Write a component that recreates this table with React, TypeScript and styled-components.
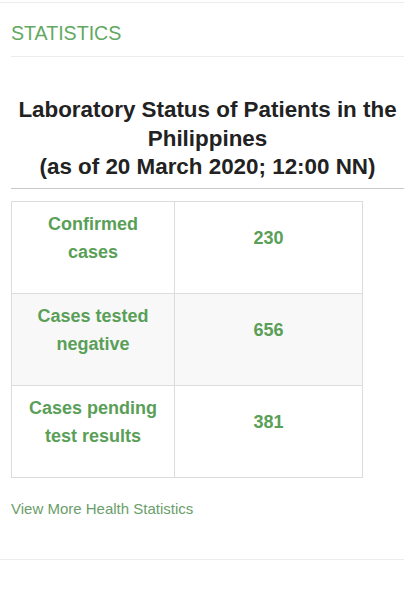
import React from "react";
import styled, { createGlobalStyle } from "styled-components";

const Global = createGlobalStyle`
  html, body { margin: 0; padding: 0; background: #fff; }
  body { font-family: "Liberation Sans", Arial, sans-serif; }
`;

const Panel = styled.div`
  margin-top: 2px;
  border-top: 1px solid #ececec;
  border-bottom: 1px solid #ececec;
  padding-bottom: 40px;
`;

const Body = styled.div`
  margin-left: 11px;
`;

const SectionTitle = styled.h2`
  margin: 0;
  padding: 19px 0 12px;
  font-size: 19.6px;
  line-height: 22px;
  font-weight: 400;
  color: #62a862;
  border-bottom: 1px solid #ececec;
`;

const Heading = styled.h3`
  margin: 39px 0 0;
  padding-bottom: 6px;
  font-size: 22.4px;
  line-height: 28.5px;
  font-weight: 700;
  color: #222;
  text-align: center;
  border-bottom: 1px solid #c8c8c8;
`;

const Table = styled.table`
  margin-top: 12px;
  border-collapse: collapse;
  width: 352px;
  table-layout: fixed;
`;

const Row = styled.tr<{ $striped?: boolean }>`
  background: ${(p) => (p.$striped ? "#f8f8f8" : "#fff")};
`;

const Cell = styled.td<{ $w?: number }>`
  border: 1px solid #dcdcdc;
  padding: 8px 8px 27px;
  height: 56px;
  width: ${(p) => (p.$w ? `${p.$w}px` : "auto")};
  vertical-align: middle;
  text-align: center;
  font-size: 18px;
  line-height: 28px;
  font-weight: 700;
  color: #5a9f58;
`;

const MoreLink = styled.a`
  display: block;
  margin-top: 21px;
  font-size: 15px;
  line-height: 20px;
  color: #6a9e6a;
  text-decoration: none;
`;

const rows = [
  { label: ["Confirmed", "cases"], value: "230" },
  { label: ["Cases tested", "negative"], value: "656" },
  { label: ["Cases pending", "test results"], value: "381" },
];

export default function App() {
  return (
    <>
      <Global />
      <Panel>
        <Body>
          <SectionTitle>STATISTICS</SectionTitle>
          <Heading>
            Laboratory Status of Patients in the Philippines
            <br />
            (as of 20 March 2020; 12:00 NN)
          </Heading>
          <Table>
            <tbody>
              {rows.map((r, i) => (
                <Row key={r.value} $striped={i === 1}>
                  <Cell $w={146}>
                    {r.label[0]}
                    <br />
                    {r.label[1]}
                  </Cell>
                  <Cell>{r.value}</Cell>
                </Row>
              ))}
            </tbody>
          </Table>
          <MoreLink href="#">View More Health Statistics</MoreLink>
        </Body>
      </Panel>
    </>
  );
}
